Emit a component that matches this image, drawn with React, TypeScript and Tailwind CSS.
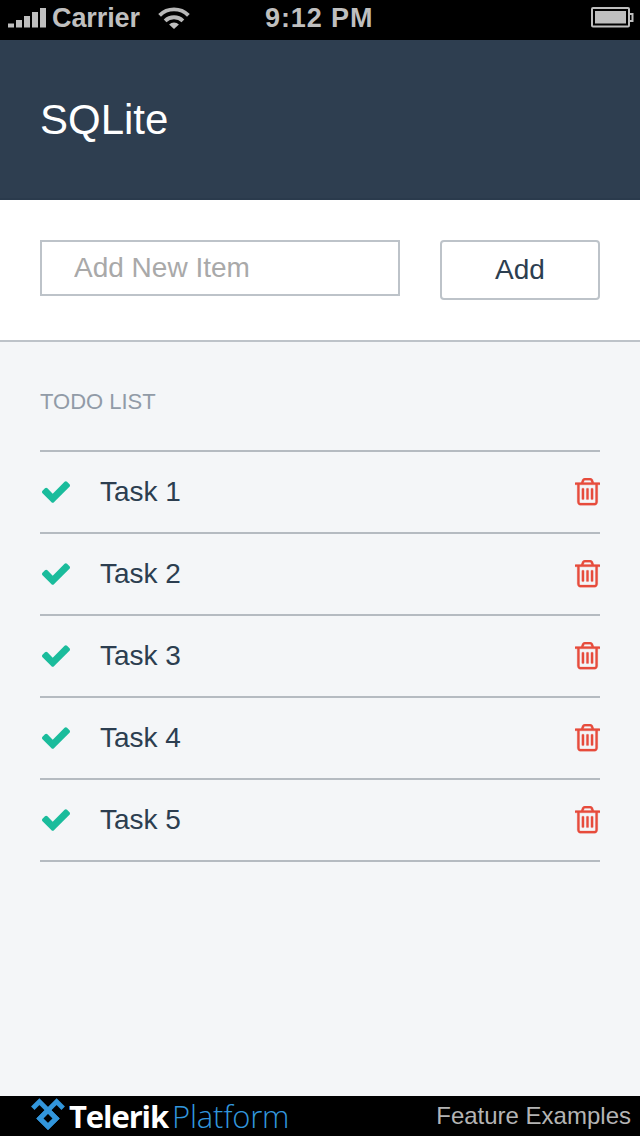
import React from "react";

const tasks = ["Task 1", "Task 2", "Task 3", "Task 4", "Task 5"];

function SignalIcon() {
  return (
    <svg width="38" height="20" viewBox="0 0 38 20" fill="#bfbfbf">
      <rect x="0" y="15.5" width="6" height="4" />
      <rect x="8" y="12" width="6" height="7.5" />
      <rect x="16" y="8" width="6" height="11.5" />
      <rect x="24" y="4" width="6" height="15.5" />
      <rect x="32" y="0" width="6" height="19.5" />
    </svg>
  );
}

function WifiIcon() {
  return (
    <svg width="32" height="22" viewBox="0 0 32 22" fill="none" stroke="#b8b8b8" strokeWidth="3.9">
      <path d="M1.6 8.3a20.5 20.5 0 0 1 28.8 0" />
      <path d="M7.1 13.9a12.8 12.8 0 0 1 17.8 0" />
      <path d="M16 22l-4.9-4.6a7 7 0 0 1 9.8 0z" fill="#bfbfbf" stroke="none" />
    </svg>
  );
}

function BatteryIcon() {
  return (
    <svg width="44" height="22" viewBox="0 0 44 22" fill="none">
      <rect x="1" y="1" width="37" height="18.5" rx="1" stroke="#bfbfbf" strokeWidth="2" />
      <rect x="4" y="4" width="31" height="12.5" fill="#bfbfbf" />
      <path d="M39 7h2.5v7H39" stroke="#bfbfbf" strokeWidth="2" />
    </svg>
  );
}

function CheckIcon() {
  return (
    <svg width="28" height="22" viewBox="121 334 1550 1188" fill="#1abc9c">
      <path d="M1671 566q0 40-28 68l-724 724-136 136q-28 28-68 28t-68-28l-136-136-362-362q-28-28-28-68t28-68l136-136q28-28 68-28t68 28l294 295 656-657q28-28 68-28t68 28l136 136q28 28 28 68z" />
    </svg>
  );
}

function TrashIcon() {
  return (
    <svg width="25" height="27.3" viewBox="192 128 1408 1536" fill="#e74c3c" stroke="#e74c3c" strokeWidth="14">
      <path d="M704 736v576q0 14-9 23t-23 9h-64q-14 0-23-9t-9-23v-576q0-14 9-23t23-9h64q14 0 23 9t9 23zm256 0v576q0 14-9 23t-23 9h-64q-14 0-23-9t-9-23v-576q0-14 9-23t23-9h64q14 0 23 9t9 23zm256 0v576q0 14-9 23t-23 9h-64q-14 0-23-9t-9-23v-576q0-14 9-23t23-9h64q14 0 23 9t9 23zm128 724v-948h-896v948q0 22 7 40.5t14.5 27 10.5 8.5h832q3 0 10.5-8.5t14.5-27 7-40.5zm-672-1076h448l-48-117q-7-9-17-11h-317q-10 2-17 11zm928 32v64q0 14-9 23t-23 9h-96v948q0 83-47 143.5t-113 60.5h-832q-66 0-113-58.5t-47-141.5v-952h-96q-14 0-23-9t-9-23v-64q0-14 9-23t23-9h309l70-167q15-37 54-63t79-26h320q40 0 79 26t54 63l70 167h309q14 0 23 9t9 23z" />
    </svg>
  );
}

function PlatformLogo() {
  return (
    <svg width="36" height="36" viewBox="30 1096 36 36" fill="none" stroke="#3296dc" strokeWidth="4.9">
      <path d="M32.8 1108.2l6.6-6.6 16.8 16.8-8.2 8.2-8.2-8.2 16.8-16.8 6.6 6.6" strokeLinejoin="miter" />
      <path d="M39.8 1118.4l8.2 8.2 8.2-8.2-8.2-8.2z" />
    </svg>
  );
}

export default function App() {
  return (
    <div className="flex h-[1136px] w-[640px] flex-col overflow-hidden bg-[#f4f6f8] font-['Liberation_Sans',Arial,sans-serif] text-[#2c3e50]">
      <div className="flex h-10 shrink-0 items-start bg-black text-[27px] leading-9 font-bold text-[#bfbfbf]">
        <div className="w-[44px] shrink-0 pt-2 pl-[7.5px]">
          <SignalIcon />
        </div>
        <div className="w-[114px] shrink-0 pl-2 tracking-[-0.1px]">Carrier</div>
        <div className="w-[107px] shrink-0 pt-[7px]">
          <WifiIcon />
        </div>
        <div className="w-[326px] shrink-0 tracking-[0.9px] whitespace-nowrap">9:12 PM</div>
        <div className="pt-[7px]">
          <BatteryIcon />
        </div>
      </div>

      <header className="h-40 shrink-0 border-b-2 border-[#2a3a4c] bg-[#2e3e50] px-10 pt-14">
        <h1 className="text-[42px] leading-[48px] font-normal text-white">SQLite</h1>
      </header>

      <form className="flex h-[142px] shrink-0 items-start gap-10 border-b-2 border-[#bdc3c9] bg-white px-10 pt-10" onSubmit={(e) => e.preventDefault()}>
        <input
          className="h-14 w-[360px] rounded-none border-2 border-[#bdc3c9] bg-white px-8 text-[28px] leading-8 outline-none placeholder:text-[#a9a9a9]"
          placeholder="Add New Item"
        />
        <button type="submit" className="h-[60px] w-40 rounded border-2 border-[#bdc3c9] bg-white text-[28px] leading-8">
          Add
        </button>
      </form>

      <main className="grow px-10">
        <h2 className="h-[108px] pt-[47px] text-[22px] leading-[26px] font-normal text-[#919ba7]">TODO LIST</h2>
        <ul className="border-t-2 border-[#b5bbc1]">
          {tasks.map((task) => (
            <li key={task} className="flex h-[82px] items-center border-b-2 border-[#b5bbc1] pl-0.5">
              <CheckIcon />
              <span className="grow pl-[30px] text-[28px] leading-8">{task}</span>
              <TrashIcon />
            </li>
          ))}
        </ul>
      </main>

      <footer className="flex h-10 shrink-0 items-start justify-between bg-black pr-[9px] pl-[30px]">
        <div className="flex items-start whitespace-nowrap">
          <PlatformLogo />
          <span className="w-[106px] pl-[3px] font-['Open_Sans',sans-serif] text-[31px] leading-10 font-bold tracking-[-1.1px] text-white">Telerik</span>
          <span className="font-['Open_Sans',sans-serif] text-[31px] leading-10 font-light tracking-[-0.2px] text-[#3296dc]">Platform</span>
        </div>
        <span className="text-[24px] leading-10 text-[#b4b4b4]">Feature Examples</span>
      </footer>
    </div>
  );
}
